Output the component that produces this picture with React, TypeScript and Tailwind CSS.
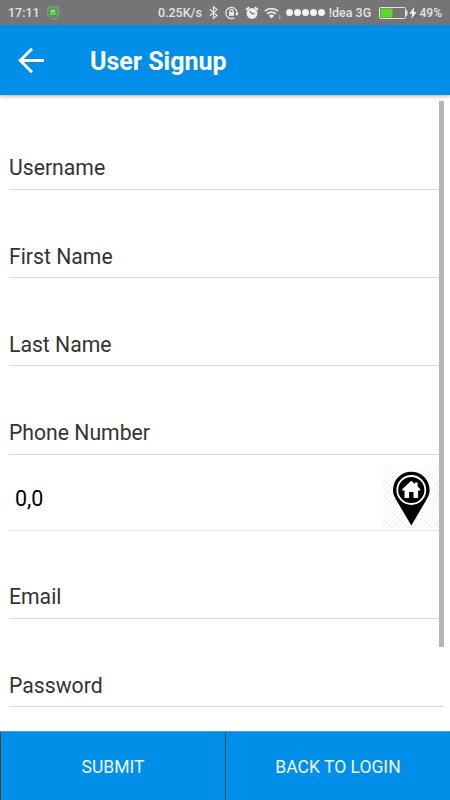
import { clsx } from 'clsx';

interface FieldProps {
  label: string;
  className: string;
}

function Field({ label, className }: FieldProps) {
  return (
    <div className={clsx('flex items-end border-b border-[#d9d9d9]', className)}>
      <span className="text-[21.2px] leading-[26px] text-[#333]">{label}</span>
    </div>
  );
}

function StatusBar() {
  return (
    <div className="relative z-20 flex h-[25px] shrink-0 items-center bg-[#757575] pl-[8px] pr-[8px] text-[12px] font-medium text-[#e4e4e4]">
      <span className="w-[39px] pt-[1px] text-[12.5px]">17:11</span>
      <svg className="h-[15px] w-[13px]" viewBox="0 0 13 15">
        <path d="M2 1h9l1.5 2v7L11 12H1.5L0 10V3z" fill="#8c8c8c" />
        <circle cx="6" cy="7.4" r="4.9" fill="#38ad2b" />
        <path d="M3.5 7a2.5 2.5 0 0 1 5 0zM3.5 7.8h5v1.7h-5z" fill="#b8e2b2" />
        <path d="M5 6h.8M7 6h.8M4.5 8.5h3" stroke="#38ad2b" strokeWidth=".6" />
        <path d="M3 14h7" stroke="#a39c8c" />
      </svg>
      <span className="ml-[98px] w-[51px] whitespace-nowrap pt-[1px] text-[12.5px]">0.25K/s</span>
      <svg className="h-[15px] w-[9px]" viewBox="0 0 9 15" fill="none" stroke="#e8e8e8" strokeWidth="1.2">
        <path d="M.8 4.2 8 10.4 4.5 13.3V1.7L8 4.6.8 10.8" />
      </svg>
      <svg className="ml-[7px] h-[14px] w-[14px]" viewBox="0 0 14 14" fill="none" stroke="#e8e8e8" strokeWidth="1.3">
        <path d="M9.4 11.7A5.6 5.6 0 1 1 12 6v2" />
        <path d="M9.8 7.2h4.2l-2.1 2.8z" fill="#e8e8e8" stroke="none" />
        <path d="M5 6.3V4.8a1.5 1.5 0 0 1 3 0v1.5" />
        <path d="M4 6h5v3.9H4z" fill="#e8e8e8" stroke="none" />
      </svg>
      <svg className="ml-[6px] h-[14px] w-[14px]" viewBox="0 0 14 14" fill="none" stroke="#eee">
        <circle cx="7" cy="7.5" r="5.4" fill="#eee" stroke="none" />
        <path d="M1 4 4.2 1.3M13 4 9.8 1.3" strokeWidth="2" />
        <path d="M4.7 5.2 7 7.6h2.7" stroke="#757575" strokeWidth="1.1" />
      </svg>
      <svg className="ml-[5px] h-[14px] w-[19px]" viewBox="0 0 19 14" fill="none" stroke="#ececec" strokeWidth="1.7">
        <path d="M.8 5.1a10 10 0 0 1 13.4 0M3 7.9a6.6 6.6 0 0 1 9 0" />
        <path d="M4.8 9.7a4 4 0 0 1 5.4 0L7.5 12.5z" fill="#ececec" stroke="none" />
        <path d="M15.8 8.2v4.6M14.4 11.2l1.4 1.6 1.4-1.6" stroke="#aaa" strokeWidth=".9" />
      </svg>
      <div className="ml-[3px] flex w-[43px] gap-[1px]">
        {[0, 1, 2, 3, 4].map((dot) => (
          <span key={dot} className="h-[7px] w-[7px] rounded-full bg-[#f2f2f2]" />
        ))}
      </div>
      <span className="w-[50px] whitespace-nowrap pt-[1px] text-[12.5px]">!dea 3G</span>
      <svg className="h-[12px] w-[29px]" viewBox="0 0 29 12">
        <rect x=".5" y=".5" width="26" height="11" rx="1" fill="none" stroke="#e6e6e6" />
        <rect x="1.5" y="1.5" width="12" height="9" fill="#5fd62c" />
        <path d="M27 3.5h1.5v5H27z" fill="#e6e6e6" />
      </svg>
      <svg className="ml-[1px] h-[12px] w-[8px]" viewBox="0 0 8 12">
        <path d="M5.3 0 .3 6.8h3L2.3 12 7.6 5H4.7z" fill="#f4f4f4" />
      </svg>
      <span className="ml-[3px] pt-[1px] text-[12px]">49%</span>
    </div>
  );
}

function LocationPin() {
  return (
    <svg className="h-[60px] w-[60px]" viewBox="0 0 60 60">
      <defs>
        <pattern id="hatch" width="5" height="5" patternUnits="userSpaceOnUse">
          <path d="M-1 6 6-1" stroke="#f3f3f3" strokeWidth="1" />
        </pattern>
      </defs>
      <rect width="60" height="60" fill="url(#hatch)" />
      <path
        d="M29.3 57.5 13.7 31C11.6 27 11 25 11 22a18.3 18.3 0 0 1 36.6 0c0 3-.8 5.5-2.7 9z"
        fill="#000"
      />
      <circle cx="29.3" cy="22" r="14" fill="none" stroke="#fff" strokeWidth="1.8" />
      <path
        d="M29.3 12.8 33 16.1V14.6h2.6v3.9l2.6 2.6v1.3h-2.1V30h-4.6v-6h-4.4v6h-4.6v-7.6h-2.1v-1.3z"
        fill="#fff"
      />
    </svg>
  );
}

export default function App() {
  return (
    <div className="relative flex h-[800px] w-[450px] flex-col overflow-hidden bg-white font-['Roboto',sans-serif]">
      <StatusBar />
      <header className="z-10 flex h-[70px] shrink-0 items-center bg-[#008fe8] pl-[18px] shadow-[0_1px_4px_rgba(0,0,0,0.35)]">
        <svg className="h-[26px] w-[28px]" viewBox="0 0 28 26" fill="none" stroke="#fff" strokeWidth="3">
          <path d="M26 13.5H3M14 1.8 2.3 13.5 14 25.2" />
        </svg>
        <h1 className="ml-[44px] pt-[4px] text-[25px] font-bold leading-[30px] text-white">User Signup</h1>
      </header>

      <main className="flex flex-1 flex-col pl-[9px] pr-[6px]">
        <Field label="Username" className="h-[95px] pb-[8px]" />
        <Field label="First Name" className="h-[88px] pb-[7px]" />
        <Field label="Last Name" className="h-[88px] pb-[7px]" />
        <Field label="Phone Number" className="h-[89px] pb-[8px]" />
        <div className="flex h-[76px] items-center justify-between border-b border-[#e4e4e4] pl-[6px] pr-[2px]">
          <span className="pt-[12px] text-[21.5px] leading-[26px] text-black">0,0</span>
          <div className="pt-[10px]">
            <LocationPin />
          </div>
        </div>
        <Field label="Email" className="h-[88px] pb-[8px]" />
        <Field label="Password" className="h-[88px] pb-[7px]" />
      </main>

      <footer className="flex h-[69px] shrink-0 border-t border-[#4aa3dc] bg-[#008fe8] text-[17.5px] text-[#f0f8ff]">
        <button className="w-[226px] border-x border-[#4b4337] pt-[2px]">SUBMIT</button>
        <button className="flex-1 pt-[2px]">BACK TO LOGIN</button>
      </footer>

      {/* Scroll indicator */}
      <div className="absolute right-[6px] top-[101px] h-[546px] w-[5px] bg-[#b5b5b5]" />
    </div>
  );
}
